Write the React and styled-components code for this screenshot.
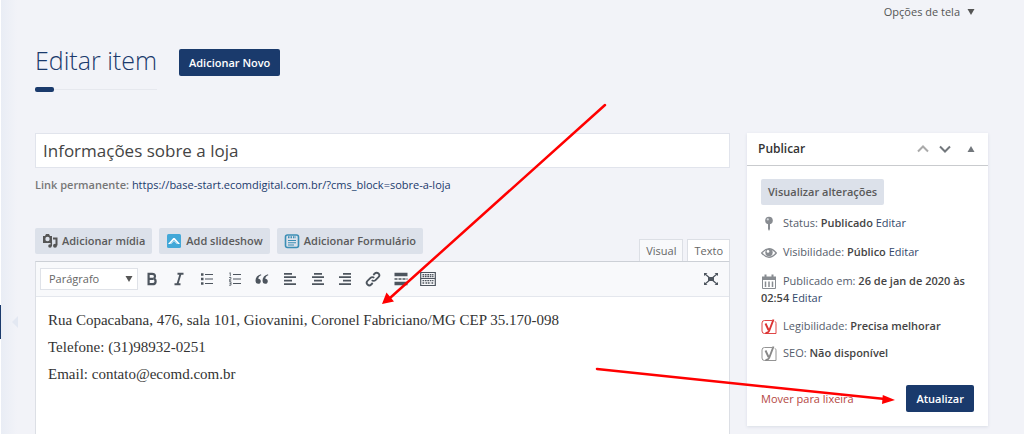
import styled, { createGlobalStyle } from 'styled-components'
import { useState } from 'react'

const GlobalStyle = createGlobalStyle`
  * {
    box-sizing: border-box;
  }

  body {
    margin: 0;
    background: #f2f3f8;
    color: #555;
    font: 11px/16px "Open Sans", "Noto Sans", sans-serif;
  }

  button, input, select {
    font: inherit;
    color: inherit;
  }

  a {
    text-decoration: none;
  }
`

const Page = styled.div`
  position: relative;
  display: flex;
  min-height: 100vh;
`

const MenuEdge = styled.aside`
  display: flex;
  flex-direction: column;
  width: 35px;
  padding-top: 305px;
  border-left: 1px solid #fff;
  background: linear-gradient(to right, #e9edf5, #f2f3f8 16px);
`

const MenuCurrent = styled.div`
  display: flex;
  align-items: center;
  height: 34px;
  margin-left: -1px;
  padding-left: 11px;
  border-left: 1px solid #1a3a6c;
`

const MenuArrow = styled.span`
  border: 6px solid transparent;
  border-left: 0;
  border-right-color: #e3e8f2;
`

const Content = styled.main`
  display: flex;
  flex-direction: column;
  flex: 1;
  min-width: 0;
  padding-right: 36px;
`

const ScreenMeta = styled.div`
  display: flex;
  justify-content: flex-end;
  padding: 4px 13px 0 0;
  height: 36px;
`

const ScreenOptions = styled.button`
  display: flex;
  align-items: center;
  gap: 7px;
  height: 16px;
  padding: 0;
  border: 0;
  background: none;
  cursor: pointer;
`

const TitleBar = styled.div`
  display: flex;
  align-items: flex-start;
  gap: 22px;
  height: 97px;
  padding-top: 6px;
`

const PageTitle = styled.h1`
  position: relative;
  margin: 0;
  padding-bottom: 11px;
  border-bottom: 1px solid #e6e8ee;
  color: #1a3a6c;
  font-size: 25px;
  font-weight: 300;
  line-height: 36px;

  &::after {
    content: '';
    position: absolute;
    left: 0;
    bottom: -3px;
    width: 19px;
    height: 5px;
    border-radius: 2px;
    background: #1a3a6c;
  }
`

const Button = styled.button`
  display: inline-flex;
  align-items: center;
  gap: 4px;
  height: 26px;
  padding: 0 7px;
  border: 0;
  border-radius: 2px;
  background: #dce1ea;
  color: #5a5a5a;
  font-weight: 600;
  white-space: nowrap;
  cursor: pointer;

  ${props => props.$primary && `
    height: 27px;
    padding: 0 10px;
    background: #1a3a6c;
    color: #fff;
  `}
`

const TitleButton = styled(Button)`
  margin-top: 7px;
`

const Columns = styled.div`
  display: grid;
  grid-template-columns: minmax(0, 1fr) 241px;
  gap: 17px;
  flex: 1;
`

const EditColumn = styled.section`
  display: flex;
  flex-direction: column;
`

const TitleInput = styled.input`
  width: 100%;
  height: 35px;
  padding: 0 7px;
  border: 1px solid #e1e4ec;
  background: #fff;
  color: #444;
  font-size: 17px;
  outline: none;
`

const Permalink = styled.div`
  margin-top: 9px;
  color: #777;

  & strong {
    font-weight: 600;
  }

  & a {
    color: #1a3a6c;
  }
`

const EditorTools = styled.div`
  display: flex;
  justify-content: space-between;
  align-items: flex-end;
  margin-top: 35px;
`

const MediaButtons = styled.div`
  display: flex;
  gap: 7px;
  padding-bottom: 7px;
`

const Tabs = styled.div`
  display: flex;
  gap: 4px;
`

const Tab = styled.button`
  height: 23px;
  margin-bottom: -1px;
  padding: 0 6px;
  border: 1px solid #dcdfe5;
  border-bottom-color: ${props => props.$active ? '#f8f9fb' : '#ccd0d6'};
  background: ${props => props.$active ? '#f8f9fb' : '#fff'};
  color: #666;
  cursor: pointer;
`

const Editor = styled.div`
  display: flex;
  flex-direction: column;
  flex: 1;
  border: 1px solid #dcdfe5;
  border-top-color: #ccd0d6;
  border-bottom: 0;
  background: #fff;
`

const Toolbar = styled.div`
  display: flex;
  align-items: center;
  height: 35px;
  padding: 0 10px 0 4px;
  border-bottom: 1px solid #e4e7ed;
  background: #f8f9fb;
`

const FormatField = styled.label`
  position: relative;
  display: flex;
  align-items: center;

  & svg {
    position: absolute;
    right: 5px;
    pointer-events: none;
  }
`

const FormatSelect = styled.select`
  width: 98px;
  height: 22px;
  padding: 0 8px;
  border: 1px solid #dfe2e8;
  border-radius: 0;
  background: #fff;
  color: #666;
  appearance: none;
`

const ToolGroup = styled.div`
  display: grid;
  grid-template-columns: repeat(11, 1fr);
  width: 304px;
  margin-right: auto;
`

const ToolButton = styled.button`
  display: flex;
  align-items: center;
  justify-content: center;
  height: 24px;
  padding: 0;
  border: 0;
  background: none;
  color: #4d555e;
  cursor: pointer;
`

const EditorBody = styled.div`
  flex: 1;
  padding: 10px 12px;
  color: #333;
  font-family: "Liberation Serif", serif;
  font-size: 15px;
  line-height: 27px;
  outline: none;

  & p {
    margin: 0;
  }
`

const SideColumn = styled.aside`
  display: flex;
  flex-direction: column;
`

const Panel = styled.section`
  background: #fff;
  box-shadow: 0 1px 3px #d9dde6;
`

const PanelHeader = styled.header`
  display: flex;
  align-items: center;
  height: 33px;
  padding: 0 9px 0 11px;
  border-bottom: 1px solid #c9cbce;

  & h2 {
    flex: 1;
    margin: 0;
    color: #333;
    font-size: 12px;
    font-weight: 600;
  }
`

const PanelControl = styled.button`
  display: flex;
  align-items: center;
  justify-content: center;
  width: 22px;
  height: 20px;
  padding: 0;
  border: 0;
  background: none;
  color: ${props => props.$dim ? '#aaa' : '#72777c'};
  cursor: pointer;
`

const PanelToggle = styled(PanelControl)`
  width: 16px;
  margin-left: 7px;
`

const PanelBody = styled.div`
  padding: 13px 14px 0;
`

const StatusList = styled.ul`
  margin: 10px 0 0;
  padding: 0;
  list-style: none;
`

const StatusItem = styled.li`
  margin-bottom: ${props => props.$tight ? '10px' : '12px'};
  color: #555d6b;

  & svg {
    margin-right: 6px;
    vertical-align: middle;
  }

  & strong {
    color: #444;
    font-weight: 600;
  }

  & a {
    color: #33496b;
  }
`

const PanelFooter = styled.footer`
  display: flex;
  align-items: center;
  justify-content: space-between;
  padding: 13px 14px 14px;
`

const TrashLink = styled.a`
  color: #b5483f;
`

const Annotations = styled.svg`
  position: absolute;
  top: 0;
  left: 0;
  pointer-events: none;
`

const Triangle = ({ up }) => (
  <svg width="8" height="6" viewBox="0 0 8 6" aria-hidden="true">
    <path d={up ? 'M4 0L7.5 6H.5z' : 'M.5 0h7L4 6z'} fill="currentColor" />
  </svg>
)

const Icon = ({ children }) => (
  <svg width="16" height="16" viewBox="0 0 16 16" fill="none" stroke="currentColor" aria-hidden="true">
    {children}
  </svg>
)

const MediaIcon = () => (
  <Icon>
    <path d="M1 3h2l1-2h3l1 2h2v7H1z" fill="#555" stroke="none" />
    <circle cx="5.5" cy="6" r="2.2" fill="#dce1ea" stroke="none" />
    <path d="M11 5.5h3.5v7" stroke="#555" strokeWidth="2" />
    <circle cx="13" cy="12.7" r="2" fill="#555" stroke="none" />
    <path d="M9.3 9v4" stroke="#555" strokeWidth="1.5" />
    <circle cx="8" cy="13" r="1.8" fill="#555" stroke="none" />
  </Icon>
)

const SlideshowIcon = () => (
  <Icon>
    <rect x="1" y="1" width="14" height="14" rx="1.5" fill="#43a8d8" stroke="none" />
    <path d="M2 11l5.3-6h1.4L14 11h-3L8 8l-3 3z" fill="#fff" stroke="none" />
    <path d="M4.5 11L8 7l3.5 4" stroke="#8dcbea" />
  </Icon>
)

const FormIcon = () => (
  <Icon>
    <rect x="1.5" y="2" width="13" height="12.5" rx="2" stroke="#3b8eb5" strokeWidth="1.6" />
    <path d="M4 4.2h8" stroke="#3b8eb5" strokeWidth="2" strokeDasharray="1.5 1" />
    <path d="M4 7.5h8M4 9.7h8M4 12h6" stroke="#3b8eb5" strokeWidth="1.1" />
  </Icon>
)

const PinIcon = () => (
  <Icon>
    <circle cx="8" cy="4.5" r="3.8" fill="#888c91" stroke="none" />
    <path d="M7 8h2v5l-1 2-1-2z" fill="#888c91" stroke="none" />
    <circle cx="6.8" cy="3.4" r="1.1" fill="#d5d8dc" stroke="none" />
  </Icon>
)

const EyeIcon = () => (
  <Icon>
    <path d="M.7 8Q8 -.5 15.3 8Q8 16.5 .7 8z" stroke="#888c91" strokeWidth="1.3" />
    <circle cx="8" cy="7.6" r="3.7" fill="#888c91" stroke="none" />
    <circle cx="7" cy="6.4" r="1.3" fill="#fff" stroke="none" />
  </Icon>
)

const CalendarIcon = () => (
  <Icon>
    <path d="M1 2.5h14V6H1z" fill="#888c91" stroke="none" />
    <path d="M4.5 .5v3M11.5 .5v3" stroke="#888c91" strokeWidth="2" />
    <path d="M1.5 5v9.5h13V5" stroke="#888c91" />
    <path d="M4.5 7.5V13M8 7.5V13M11.5 7.5V13" stroke="#888c91" strokeWidth="1.5" />
  </Icon>
)

const YoastIcon = ({ color }) => (
  <Icon>
    <path d="M11 1.5H3.5A2.5 2.5 0 0 0 1 4v8a2.5 2.5 0 0 0 2.5 2.5H15v-10q0-1.5-1-2.2" stroke={color} strokeWidth=".9" />
    <path d="M4.5 4.5l3 6.5M12.5 .5l-4.2 11q-1 2.5-3.8 2.5" stroke={color} strokeWidth="1.9" />
  </Icon>
)

const TOOLS = [
  {
    label: 'Negrito',
    icon: <path d="M4.6 2.8v10.4h3.7q3.3 0 3.3-2.8 0-2.4-2.2-2.7 1.6-.5 1.6-2.5 0-2.4-3-2.4zM5.5 7.9H9" strokeWidth="2.2" />
  },
  {
    label: 'Itálico',
    icon: <path d="M6.5 2.8h6M3.5 13.2h6M9.6 2.8L6.4 13.2" strokeWidth="1.9" />
  },
  {
    label: 'Lista com marcadores',
    icon: <path d="M2 3.5h2.5M2 8h2.5M2 12.5h2.5" strokeWidth="2.4" />,
    extra: <path d="M6 3.5h8M6 8h8M6 12.5h8" strokeWidth="1.2" />
  },
  {
    label: 'Lista numerada',
    icon: <path d="M6 3.5h8M6 8h8M6 12.5h8" strokeWidth="1.2" />,
    extra: <path d="M2.3 2.2l1-.5v3.5M2 6.5h2v1.3L2 9.2h2.3M2 10.7h2v3.5H2M2.5 12.4H4" strokeWidth=".8" />
  },
  {
    label: 'Bloco de citação',
    icon: <path d="M7 3.2C3.5 4 1.5 6.5 1.5 9.5c0 2 1 3.3 2.7 3.3 1.5 0 2.6-1 2.6-2.6S5.8 7.7 4.3 7.7C4.5 6 5.5 4.9 7.3 4.3zM14 3.2c-3.5.8-5.5 3.3-5.5 6.3 0 2 1 3.3 2.7 3.3 1.5 0 2.6-1 2.6-2.6s-1-2.5-2.5-2.5c.2-1.7 1.2-2.8 3-3.4z" fill="currentColor" stroke="none" />
  },
  {
    label: 'Alinhar à esquerda',
    icon: <path d="M2 2.8h8M2 6.2h12M2 9.7h8M2 13.2h12" strokeWidth="1.7" />
  },
  {
    label: 'Centralizar',
    icon: <path d="M4 2.8h8M2 6.2h12M4 9.7h8M2 13.2h12" strokeWidth="1.7" />
  },
  {
    label: 'Alinhar à direita',
    icon: <path d="M6 2.8h8M2 6.2h12M6 9.7h8M2 13.2h12" strokeWidth="1.7" />
  },
  {
    label: 'Inserir link',
    icon: <path d="M6.8 9.2a2.6 2.6 0 0 0 3.7 0l3-3a2.6 2.6 0 0 0-3.7-3.7L8.3 4M9.2 6.8a2.6 2.6 0 0 0-3.7 0l-3 3a2.6 2.6 0 0 0 3.7 3.7L7.7 12" strokeWidth="1.8" />
  },
  {
    label: 'Inserir tag Leia mais',
    icon: <path d="M1.5 3.5h13M1.5 12.5h13" strokeWidth="3.4" />,
    extra: <path d="M1.5 8h13" strokeWidth="1.3" strokeDasharray="3 1" />
  },
  {
    label: 'Alternar barra de ferramentas',
    icon: <path d="M.7 1.5h14.6v13H.7zM.7 7.5h14.6" strokeWidth="1.2" />,
    extra: <path d="M2.5 3.7h11M2.5 5.5h11M2.5 9.7h11M2.5 12h2M5.5 12h5M11.5 12h2" strokeWidth="1.3" strokeDasharray="1.7 .7" />
  }
]

function Status({ icon, label, value, editable, tight }) {
  return (
    <StatusItem $tight={tight}>
      {icon}
      {label}: <strong>{value}</strong>
      {editable && <> <a href="#editar">Editar</a></>}
    </StatusItem>
  )
}

function App() {
  const [title, setTitle] = useState('Informações sobre a loja')
  const [mode, setMode] = useState('Visual')

  return (
    <Page>
      <GlobalStyle />
      <MenuEdge>
        <MenuCurrent>
          <MenuArrow />
        </MenuCurrent>
      </MenuEdge>

      <Content>
        <ScreenMeta>
          <ScreenOptions>Opções de tela <Triangle /></ScreenOptions>
        </ScreenMeta>

        <TitleBar>
          <PageTitle>Editar item</PageTitle>
          <TitleButton $primary>Adicionar Novo</TitleButton>
        </TitleBar>

        <Columns>
          <EditColumn>
            <TitleInput type="text" aria-label="Título" value={title} onChange={e => setTitle(e.target.value)} />
            <Permalink>
              <strong>Link permanente:</strong>{' '}
              <a href="#permalink">https://base-start.ecomdigital.com.br/?cms_block=sobre-a-loja</a>
            </Permalink>

            <EditorTools>
              <MediaButtons>
                <Button><MediaIcon />Adicionar mídia</Button>
                <Button><SlideshowIcon />Add slideshow</Button>
                <Button><FormIcon />Adicionar Formulário</Button>
              </MediaButtons>
              <Tabs>
                {['Visual', 'Texto'].map(name => (
                  <Tab key={name} $active={mode === name} onClick={() => setMode(name)}>{name}</Tab>
                ))}
              </Tabs>
            </EditorTools>

            <Editor>
              <Toolbar>
                <FormatField>
                  <FormatSelect aria-label="Formato">
                    <option>Parágrafo</option>
                  </FormatSelect>
                  <Triangle />
                </FormatField>
                <ToolGroup>
                  {TOOLS.map(tool => (
                    <ToolButton key={tool.label} aria-label={tool.label}>
                      <Icon>{tool.icon}{tool.extra}</Icon>
                    </ToolButton>
                  ))}
                </ToolGroup>
                <ToolButton aria-label="Tela cheia">
                  <Icon>
                    <path d="M2 3l12 10M14 3L2 13" strokeWidth="1.2" />
                    <path d="M5 6h6v4H5z" fill="currentColor" stroke="none" />
                    <path d="M1 2h3.5L1 5zM15 2h-3.5L15 5zM1 14h3.5L1 11zM15 14h-3.5l3.5-3z" fill="currentColor" stroke="none" />
                  </Icon>
                </ToolButton>
              </Toolbar>
              <EditorBody role="textbox" aria-label="Conteúdo" contentEditable suppressContentEditableWarning spellCheck={false}>
                <p>Rua Copacabana, 476, sala 101, Giovanini, Coronel Fabriciano/MG CEP 35.170-098</p>
                <p>Telefone: (31)98932-0251</p>
                <p>Email: contato@ecomd.com.br</p>
              </EditorBody>
            </Editor>
          </EditColumn>

          <SideColumn>
            <Panel>
              <PanelHeader>
                <h2>Publicar</h2>
                <PanelControl $dim aria-label="Mover para cima">
                  <Icon><path d="M3 10.5l5-5 5 5" strokeWidth="2" /></Icon>
                </PanelControl>
                <PanelControl aria-label="Mover para baixo">
                  <Icon><path d="M3 5.5l5 5 5-5" strokeWidth="2" /></Icon>
                </PanelControl>
                <PanelToggle aria-label="Alternar painel"><Triangle up /></PanelToggle>
              </PanelHeader>
              <PanelBody>
                <Button>Visualizar alterações</Button>
                <StatusList>
                  <Status icon={<PinIcon />} label="Status" value="Publicado" editable />
                  <Status icon={<EyeIcon />} label="Visibilidade" value="Público" editable />
                  <Status icon={<CalendarIcon />} label="Publicado em" value="26 de jan de 2020 às 02:54" editable />
                  <Status icon={<YoastIcon color="#dc3232" />} label="Legibilidade" value="Precisa melhorar" tight />
                  <Status icon={<YoastIcon color="#888" />} label="SEO" value="Não disponível" tight />
                </StatusList>
              </PanelBody>
              <PanelFooter>
                <TrashLink href="#lixeira">Mover para lixeira</TrashLink>
                <Button $primary>Atualizar</Button>
              </PanelFooter>
            </Panel>
          </SideColumn>
        </Columns>
      </Content>

      <Annotations width="1024" height="434" viewBox="0 0 1024 434" aria-hidden="true">
        <path d="M605 105L390 298M597 369l288 30" stroke="#f00" strokeWidth="2.5" strokeLinecap="round" />
        <path d="M382 304l4.500-11.500 7.500 9zM895 400l-13 4 .8-9z" fill="#f00" />
      </Annotations>
    </Page>
  )
}

export default App
